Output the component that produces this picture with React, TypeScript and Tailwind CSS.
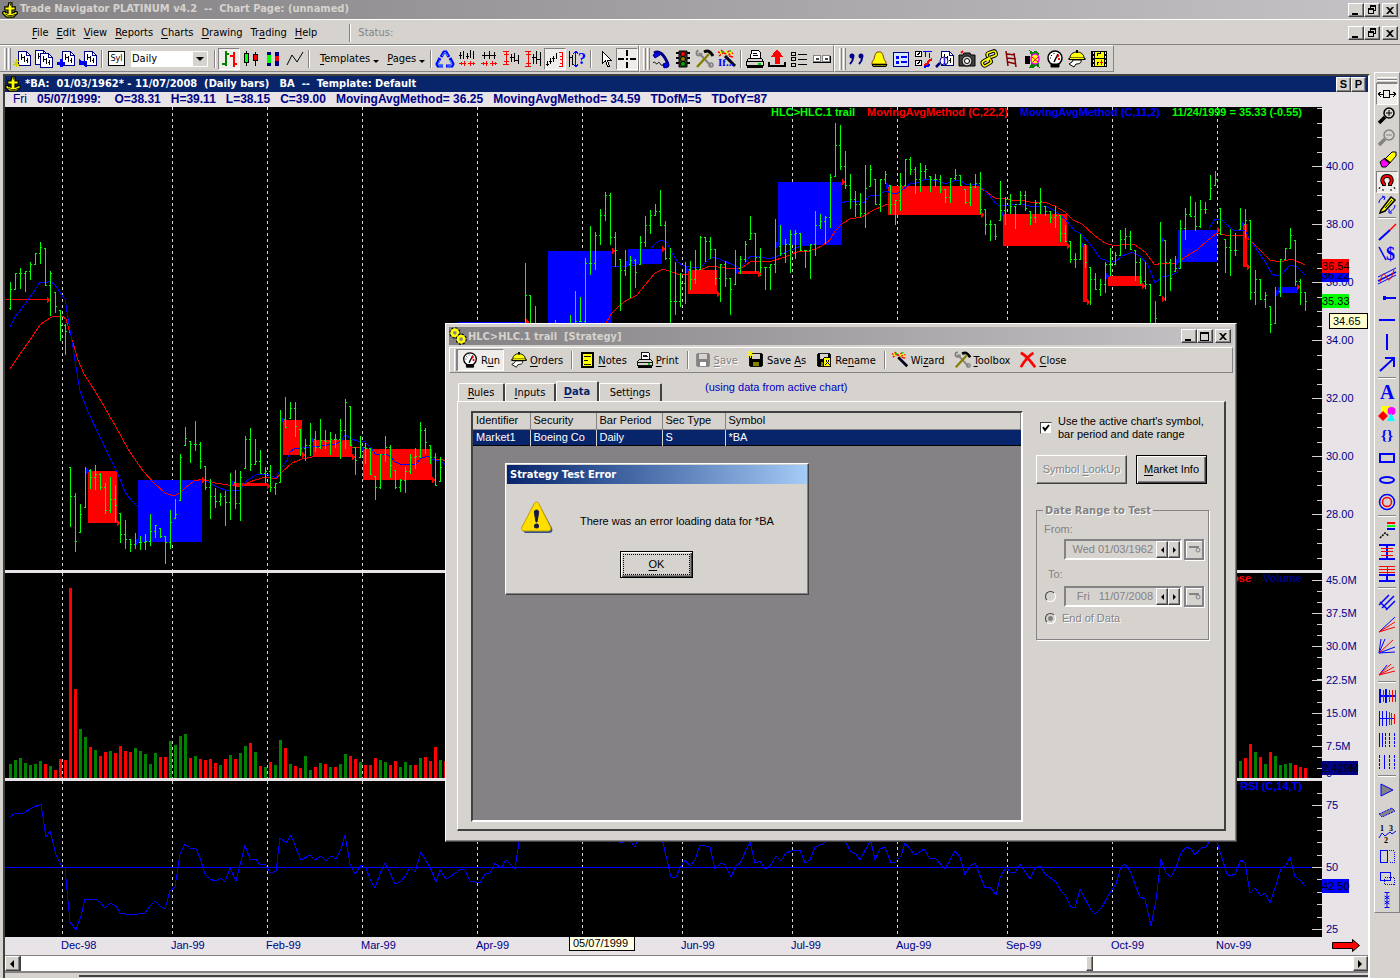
import React from "react";

const UI = "font-['DejaVu_Sans_Condensed','DejaVu_Sans',sans-serif]";
const SANS = "font-['Liberation_Sans',Arial,sans-serif]";
const RAISED =
  "border border-t-white border-l-white border-r-[#424142] border-b-[#424142] shadow-[inset_-1px_-1px_#848284]";
const SUNKEN =
  "border border-t-[#848284] border-l-[#848284] border-r-white border-b-white";

/* ---------- chart data (y values are in chart pixels) ---------- */

type Bar = { x: number; h: number; l: number; o: number; c: number };

// "high low close" for each bar, 5px apart
const SEGMENTS: { start: number; data: string }[] = [
  {
    start: 0,
    data: "282 309 289,273 289 273,268 288 273,271 291 271,262 279 264,253 264 253,242 263 247,248 285 285,271 315 273,292 312 306,310 340 325,324 354 331,467 526 496,493 551 541,504 532 514,467 507 470,469 488 477,465 489 474,473 489 487,483 513 510,477 512 499,485 521 505,513 542 534,520 548 539,539 551 544,533 548 542,536 549 542,534 549 541,514 545 531,525 537 525,528 537 536,536 563 542,510 548 522,499 518 514,454 500 457,427 445 438,441 462 444,421 450 444,442 468 461,466 489 487,479 518 496,488 507 501,493 505 496,491 525 502,473 519 482,470 508 503,471 520 477,436 468 439,428 470 464,439 464 461,450 473 473,467 482 471,465 491 487,483 494 483,410 482 419,397 427 427,402 418 408,402 436 426,429 455 448,439 460 445,423 455 439,431 451 447,419 448 440,430 448 441,432 454 439,434 447 439,419 458 430,399 448 402,406 445 445,447 474 460,436 457 447,443 463 448,448 474 474,476 499 487,454 488 454,436 461 447,445 477 465,470 488 487,479 491 480,467 492 471,454 473 457,448 468 456,422 457 430,428 453 442,445 463 457,453 485 485,457 481 467",
  },
  { start: 103, data: "263 340 295,295 340 330,306 340 330" },
  {
    start: 109,
    data: "320 340 330,330 340 330,330 340 330,315 340 330,291 340 321,297 321 321,258 340 263,226 274 263,232 269 235,209 244 215,192 220 195,193 244 237,232 266 250,259 310 270,250 275 264,256 297 260,259 287 272,236 264 242,216 246 225,210 233 215,204 215 211,190 225 225,221 259 258,248 340 301,262 314 301,273 306 283,262 303 269,261 289 279,250 283 269,236 269 237,237 261 241,237 258 249,249 284 278,264 301 264,261 286 278,278 314 289,250 284 268,256 273 259,241 261 244,216 239 233,233 271 257,248 275 267,267 289 267,264 289 264,219 272 246,225 255 253,239 262 244,230 272 234,230 258 233,233 250 250,250 267 250,244 278 244,211 255 225,214 228 221,216 243 217,174 227 177,123 176 145,125 169 166,151 188 185,174 208 199,191 216 204,193 216 213,165 227 188,165 186 169,179 204 204,179 211 179,171 183 174,185 213 204,200 224 200,173 210 185,159 185 159,157 174 169,167 193 179,163 191 171,165 178 169,176 191 179,174 186 179,175 192 189,189 202 197,178 202 178,169 179 175,175 185 185,189 203 202,183 205 187,174 187 183,172 213 209,209 234 224,220 240 224,224 239 236,181 220 210,197 224 199,194 213 206,206 228 204,191 204 195,191 210 208,211 224 217,200 222 203,188 213 201,206 215 211,211 222 217,206 227 215,215 241 233,225 241 241,241 262 259,253 267 259,234 259 244,244 267 262,267 304 279,273 289 289,279 295 284,262 292 264,248 275 264,252 264 255,230 255 239,228 248 236,231 249 249,250 280 262,258 283 281,262 288 284,284 340 330,301 340 318,222 295 240,240 300 262,259 290 278,256 271 268,220 268 228,208 239 214,196 216 216,202 230 226,200 227 209,202 213 209,175 199 188,171 185 179,208 234 234,239 272 247,229 275 250,233 255 250,208 229 224,209 237 220,220 299 292,270 304 279,279 299 299,292 307 295,306 332 324,287 323 291,259 296 259,248 259 248,228 248 235,240 285 281,279 304 292,292 310 301",
  },
];

const BARS: Bar[] = SEGMENTS.flatMap(({ start, data }) => {
  let prev = 0;
  return data.split(",").map((s, i) => {
    const [h, l, c] = s.split(" ").map(Number);
    const o = prev ? Math.min(Math.max(prev, h), l) : l - 1;
    prev = c;
    return { x: 10 + 5 * (start + i), h, l, o, c };
  });
});

const VOLUME =
  "14g 18g 20g 15g 13g 14g 17g 14r 12g 8r 19r 18r 190r 89r 49g 41g 31r 28g 22r 26r 27g 25r 32r 27r 26r 30g 27g 24g 14g 25g 21r 21r 37g 33g 42g 44g 20r 22g 19r 18r 19r 15r 13g 19r 23g 19r 25g 32g 35r 26g 12r 11g 16r 13g 38g 30r 14g 12r 10r 22g 8g 11r 15g 14r 11g 11r 14g 24g 22r 19r 16g 13r 13r 20r 18g 16g 13r 17r 11g 16g 13g 13r 20g 21r 17r 31r 18g 17r".split(" ");
const VOLUME_END = "17g 20r 34r 26g 21r 14g 26r 22g 13g 14g 15g 13r 11r 10r".split(" ");

const BLUE_MA = [
  "10,327 15,317 25,304 35,290 40,282 46,283 50,281 55,285 62,295 65,299 70,330 80,391 88,412 100,437 110,458 118,474 125,492 131,500 138,507",
  "201,479 208,482 215,486 225,490 236,491 240,490 247,480 258,474 266,474 276,478 280,470 287,460 290,452 295,448 302,448 320,446 335,444 341,441 345,435 352,439 357,441 365,442 372,449 375,454 380,455 387,454 391,457 395,462 403,465 412,464 416,464 420,459 427,456 432,459 440,461 446,465",
  "612,266 620,267 627,266 635,265 641,262 645,258 650,250 656,243 661,240 667,243 672,253 678,262 682,265 690,267 700,268 707,261 712,257 722,260 733,265 740,268 745,263 750,256 760,257 770,259 780,255 786,252 795,248 802,246 812,245 815,243",
  "842,203 847,201 857,201 864,203 868,197 872,195 878,196 885,191 892,193 897,194 902,190 910,184 920,182 925,179 938,181 945,184 953,181 960,180 965,184 977,184 983,189 990,196 995,203 1000,206 1010,205 1022,204 1032,207 1045,206 1055,211 1065,219 1075,231 1081,234 1090,244 1100,258 1107,261 1116,261 1122,256 1132,252 1140,256 1148,265 1155,283 1162,277 1172,275 1177,272 1180,264",
  "1209,229 1215,219 1221,219 1227,225 1235,231 1245,230 1250,240 1260,254 1267,265 1272,274 1277,276 1283,273 1290,265 1297,267 1305,275",
];
const RED_MA = [
  "10,369 20,354 30,340 40,325 45,321 52,317 62,316 66,319 70,333 78,360 84,374 95,391 105,408 116,427 128,449 143,471 155,484 165,493 174,496 180,493 185,488 194,481 203,479 215,483 235,486 240,486 255,480 266,477 276,479 282,472 292,463 302,459 312,457 325,454 340,448 355,447 364,447 370,450 432,459 443,460 446,461",
  "606,323 612,313 620,305 627,300 637,295 645,285 655,273 663,269 672,272 680,275 690,274 700,270 710,266 725,268 737,269 743,267 750,262 760,261 772,261 785,257 797,252 810,251 822,246 830,240 835,231 843,223 850,219 862,217 870,212 885,205 890,204",
  "980,188 988,193 995,198 1005,199 1015,201 1022,200 1030,202 1047,203 1055,206 1065,212 1073,220 1082,224 1095,236 1105,243 1115,246 1128,244 1135,245 1145,252 1155,265 1162,263 1177,264 1185,257 1197,250 1207,241 1217,233 1225,235 1235,236 1243,235 1250,240 1260,250 1270,260 1280,262 1292,259 1305,265",
];
const RSI =
  "10,817 15,813 23,813 32,808 41,804 46,837 50,831 56,855 62,867 65,868 70,922 76,930 81,916 85,899 95,899 100,902 105,908 110,903 116,906 120,913 131,915 145,913 150,906 155,901 161,907 165,909 170,891 175,887 180,854 185,844 190,848 196,849 200,858 205,874 210,879 215,881 221,878 225,882 230,868 236,881 240,865 245,845 250,859 256,859 260,865 265,864 270,873 276,871 280,838 286,843 291,835 296,848 301,860 310,855 315,860 321,856 326,861 331,856 336,859 341,849 345,835 350,864 355,874 361,865 366,868 370,879 375,888 381,871 385,863 390,873 395,884 401,881 406,875 410,867 415,872 421,852 426,861 430,867 436,882 440,870 446,879 451,876 461,869 465,870 470,881 480,883 485,874 490,873 495,863 501,868 506,860 515,869 519,842 540,800 580,820 610,835 621,843 628,838 635,847 640,830 655,825 663,843 671,877 676,877 680,868 685,860 690,866 695,860 700,845 710,847 715,869 721,863 725,865 731,877 736,866 740,863 750,842 755,863 760,861 765,869 770,866 776,856 781,861 786,853 791,851 800,850 805,863 810,860 815,847 823,844 835,825 846,843 851,852 856,854 860,860 869,843 871,842 875,860 880,849 885,847 891,863 895,862 901,856 905,843 915,855 924,849 930,859 935,858 945,869 955,851 960,857 965,875 970,866 975,863 985,888 990,887 996,895 1000,878 1006,867 1010,872 1015,873 1020,864 1030,879 1035,868 1040,866 1045,874 1056,882 1061,891 1065,895 1071,907 1075,908 1080,889 1091,910 1095,914 1102,907 1111,891 1116,884 1121,867 1125,864 1131,873 1136,887 1140,897 1145,899 1151,926 1156,900 1161,859 1166,873 1171,877 1176,867 1181,853 1186,847 1191,849 1195,855 1201,848 1206,847 1209,842 1214,835 1217,842 1227,874 1230,876 1235,874 1241,860 1245,863 1250,893 1255,888 1261,896 1265,893 1270,903 1276,885 1281,869 1286,865 1290,857 1295,877 1300,880 1305,886";

// x1, y1, x2, y2, colour of each trade
const TRADES: [number, number, number, number, string][] = [
  [88, 471, 117, 523, "#f00"],
  [138, 480, 202, 542, "#00f"],
  [233, 483, 267, 486, "#f00"],
  [283, 420, 302, 455, "#f00"],
  [313, 440, 352, 457, "#f00"],
  [363, 449, 432, 480, "#f00"],
  [458, 322, 526, 330, "#00f"],
  [548, 251, 612, 340, "#00f"],
  [628, 249, 662, 264, "#00f"],
  [688, 270, 717, 294, "#f00"],
  [738, 271, 758, 274, "#f00"],
  [778, 182, 842, 245, "#00f"],
  [888, 186, 981, 215, "#f00"],
  [1003, 214, 1067, 246, "#f00"],
  [1083, 245, 1087, 302, "#f00"],
  [1108, 276, 1142, 286, "#f00"],
  [1178, 230, 1217, 262, "#00f"],
  [1243, 224, 1247, 267, "#f00"],
  [1278, 287, 1297, 293, "#00f"],
];

const MONTHS: [string, number][] = [
  ["Dec-98", 62],
  ["Jan-99", 172],
  ["Feb-99", 267],
  ["Mar-99", 362],
  ["Apr-99", 477],
  ["", 582],
  ["Jun-99", 682],
  ["Jul-99", 792],
  ["Aug-99", 897],
  ["Sep-99", 1007],
  ["Oct-99", 1112],
  ["Nov-99", 1217],
];

/* ---------- chart panes ---------- */

const Plot: React.FC<{ top: number; children: React.ReactNode }> = ({ top, children }) => (
  <svg className="block flex-1 min-w-0 h-full bg-black" shapeRendering="crispEdges">
    <g transform={`translate(-5 ${-top})`}>
      {MONTHS.map(([, x]) => (
        <line key={x} x1={x + 0.5} x2={x + 0.5} y1={top} y2={top + 470} stroke="#d6d3ce" strokeDasharray="3 3" />
      ))}
      {children}
    </g>
  </svg>
);

type AxisProps = {
  top: number;
  height: number;
  labels: [string, number][];
  step: number;
  children?: React.ReactNode;
};

const Axis: React.FC<AxisProps> = ({ top, height, labels, step, children }) => {
  const ticks: number[] = [];
  for (let y = labels[0][1]; y > top; y -= step) ticks.push(y);
  for (let y = labels[0][1] + step; y < top + height; y += step) ticks.push(y);
  return (
    <svg className={`block w-[57px] h-full flex-none ${SANS} text-[11px]`}>
      <rect width="11" height="100%" fill="#000" />
      <g transform={`translate(-1311 ${-top})`}>
        <g stroke="#d6d3ce" shapeRendering="crispEdges">
          {ticks.map((y) => (
            <line key={y} x1="1317" x2="1322" y1={Math.round(y) + 0.5} y2={Math.round(y) + 0.5} />
          ))}
          {labels.map(([t, y]) => (
            <line key={t} x1="1312" x2="1322" y1={y + 0.5} y2={y + 0.5} />
          ))}
        </g>
        {labels.map(([t, y]) => (
          <text key={t} x="1326" y={y + 4} fill="#000084">
            {t}
          </text>
        ))}
        {children}
      </g>
    </svg>
  );
};

const Tag: React.FC<{ y: number; w?: number; fill: string; text: string }> = ({ y, w = 27, fill, text }) => (
  <g>
    <rect x="1322" y={y - 7} width={w} height="14" fill={fill} />
    <text x="1322" y={y + 4} fill="#000">
      {text}
    </text>
  </g>
);

const LEGEND = `absolute right-[66px] top-0 flex gap-3 text-[11px] leading-[11px] font-bold ${SANS}`;

const PricePane = () => (
  <div className="relative flex h-[463px]">
    <Plot top={107}>
      <line x1="5" x2="48" y1="299.5" y2="299.5" stroke="#f00" />
      {TRADES.map(([x1, y1, x2, y2, c]) => (
        <rect key={x1} x={x1} y={y1} width={x2 - x1} height={y2 - y1} fill={c} />
      ))}
      <g fill="none">
        {RED_MA.map((p) => (
          <polyline key={p} points={p} stroke="#f00" />
        ))}
        {BLUE_MA.map((p) => (
          <polyline key={p} points={p} stroke="#00f" />
        ))}
        {BARS.map((b) => (
          <path
            key={b.x}
            d={`M${b.x + 0.5} ${b.h}V${b.l + 1}M${b.x - 1} ${b.o + 0.5}h2M${b.x} ${b.c + 0.5}h2`}
            stroke="#0f0"
          />
        ))}
      </g>
      {TRADES.map(([x1, y1, x2, y2, c]) => (
        <g key={x1}>
          <path d={`M${x1 - 2} ${(c === "#f00" ? y1 : y2) - 3}l4 3l-4 3z`} fill="#00f" />
          <path d={`M${x2} ${(c === "#f00" ? y2 : y1) - 3}l4 3l-4 3z`} fill="#f00" />
        </g>
      ))}
      <path d="M47 297l4 3l-4 3zM1162 296l4 3l-4 3z" fill="#f00" />
      <path d="M1161 237l4 3l-4 3z" fill="#00f" />
    </Plot>
    <Axis
      top={107}
      height={463}
      step={14.5}
      labels={[
        ["40.00", 166],
        ["38.00", 224],
        ["36.00", 282],
        ["34.00", 340],
        ["32.00", 398],
        ["30.00", 456],
        ["28.00", 514],
      ]}
    >
      <Tag y={275} fill="#00f" text="36.22" />
      <Tag y={266} fill="#f00" text="36.54" />
      <Tag y={301} fill="#0f0" text="35.33" />
      <rect x="1329.5" y="313.5" width="38" height="15" fill="#ffffce" stroke="#000" />
      <text x="1333" y="325">
        34.65
      </text>
    </Axis>
    <div className={LEGEND}>
      <span className="text-[#00ff00]">HLC&gt;HLC.1 trail</span>
      <span className="text-[#ff0000]">MovingAvgMethod (C,22,2)</span>
      <span className="text-[#0000ff]">MovingAvgMethod (C,11,2)</span>
      <span className="text-[#00ff00]">11/24/1999 = 35.33 (-0.55)</span>
    </div>
  </div>
);

const VolumePane = () => (
  <div className="relative flex h-[205px]">
    <Plot top={573}>
      {[...VOLUME.map((v, i) => [v, i] as const), ...VOLUME_END.map((v, i) => [v, i + 246] as const)].map(([v, i]) => (
        <rect
          key={i}
          x={9 + 5 * i}
          y={778 - parseInt(v)}
          width="3"
          height={parseInt(v)}
          fill={v.endsWith("g") ? "#008200" : "#f00"}
        />
      ))}
    </Plot>
    <Axis
      top={573}
      height={205}
      step={11.05}
      labels={[
        ["45.0M", 580],
        ["37.5M", 613],
        ["30.0M", 646],
        ["22.5M", 680],
        ["15.0M", 713],
        ["7.5M", 746],
      ]}
    >
      <text x="1326" y="777" fill="#000084">
        0
      </text>
      <Tag y={768} w={36} fill="#000084" text="2.429M" />
    </Axis>
    <div className={LEGEND}>
      <span className="text-[#ff0000]">Close</span>
      <span className="text-[#000084]">Volume</span>
    </div>
  </div>
);

const RsiPane = () => (
  <div className="relative flex h-[156px]">
    <Plot top={781}>
      <line x1="0" x2="4000" y1="867.5" y2="867.5" stroke="#00f" />
      <polyline points={RSI} stroke="#00f" fill="none" />
    </Plot>
    <Axis
      top={781}
      height={156}
      step={12.4}
      labels={[
        ["75", 805],
        ["50", 867],
        ["25", 929],
      ]}
    >
      <Tag y={886} fill="#00f" text="42.50" />
    </Axis>
    <div className={LEGEND}>
      <span className="text-[#0000ff]">RSI (C,14,T)</span>
    </div>
  </div>
);

const TimeAxis = () => (
  <div className="flex h-[18px]">
    <svg className={`block flex-1 min-w-0 h-full overflow-visible ${SANS} text-[11px]`}>
      {MONTHS.map(([t, x]) => (
        <text key={x} x={x - 6} y="12" fill="#000084">
          {t}
        </text>
      ))}
      <rect x="564.5" y="-1.5" width="65" height="15" fill="#ffffe7" stroke="#000" />
      <text x="568" y="10">
        05/07/1999
      </text>
    </svg>
    <svg className="block flex-none w-[57px] h-full">
      <path d="M21.5 5.5h20v-3l7 6l-7 6v-3h-20z" fill="#f00" stroke="#000" />
    </svg>
  </div>
);

/* ---------- icons ---------- */

const Icon: React.FC<{ children: React.ReactNode; size?: string }> = ({ children, size = "w-5 h-5" }) => (
  <svg viewBox="0 0 20 20" className={`block flex-none ${size}`} fill="none" stroke="#000" shapeRendering="crispEdges">
    {children}
  </svg>
);

const Soft: React.FC<{ children: React.ReactNode }> = ({ children }) => (
  <g shapeRendering="auto">{children}</g>
);

type GlyphProps = { x: number; y: number; size: number; fill?: string; children: string };

const Glyph: React.FC<GlyphProps> = ({ x, y, size, fill = "#00f", children }) => (
  <text x={x} y={y} fontSize={size} fill={fill} stroke="none" fontWeight="bold" fontFamily="Liberation Serif, serif">
    {children}
  </text>
);

const Anchor = () => (
  <Icon size="w-4 h-4">
    <Soft>
      <path d="M8.500 1h4v5h4v4h-4v4l3-1v-1h3l1 2l-5 5h-9l-5-5l1-2h3v1l3 1v-4h-4v-4h4z" fill="#ff0" stroke="#000" strokeWidth="1.500" />
      <circle cx="10.500" cy="3.500" r="1" fill="#000" stroke="none" />
      <path d="M4 15l4 2h5l4-2" />
    </Soft>
  </Icon>
);

const Doc = ({ x = 5, y = 2 }: { x?: number; y?: number }) => (
  <g transform={`translate(${x} ${y})`}>
    <path d="M.5.5h8l4 4v10h-12z" fill="#fff" stroke="#000084" />
    <path d="M8.500.5v4h4" stroke="#000084" />
    <path d="M3.500 3v6M3.500 6.500h3M6.500 5v6M8 9.500h2M9.500 7v5" />
  </g>
);

const Gauge = () => (
  <Soft>
    <circle cx="10" cy="9" r="7" fill="#fff" strokeWidth="1.500" />
    <path d="M6 15h8v3h-8z" fill="#000" />
    <path d="M9 13l4-8" strokeWidth="1.500" />
    <path d="M12 8l2-2M13 10h2" stroke="#f00" strokeWidth="2" />
    <path d="M5 9h1M6 6l1 1M9 4v1" />
  </Soft>
);

const Hat = () => (
  <Soft>
    <path d="M3 9c0-8 14-8 14 0z" fill="#ff0" />
    <path d="M10 1v3M1.500 10h17" stroke="#000" strokeWidth="2" />
    <path d="M3 9.500h14" stroke="#ff0" />
    <path d="M6 11h8c1 3-2 4-5 4l-2 3l-5-3l3-2z" fill="#fff" />
  </Soft>
);

const Printer = () => (
  <>
    <path d="M5.500 9.500l1-8h7l2 2v6z" fill="#fff" />
    <path d="M8 4.500h4M8 6.500h5" />
    <path d="M3.500 9.500h13l2 3v4h-17v-4z" fill="#d6d3ce" />
    <path d="M2 12.500h16" />
    <path d="M2 17.500h16" strokeWidth="2" />
    <path d="M13 14.500h3" stroke="#0c0" strokeWidth="2" />
  </>
);

const Tools = () => (
  <Soft>
    <path d="M4 4l12 13" stroke="#848284" strokeWidth="2" />
    <circle cx="4" cy="4" r="2.500" stroke="#848284" strokeWidth="2" strokeDasharray="11 5" />
    <circle cx="16" cy="16" r="2" stroke="#848284" strokeWidth="1.500" />
    <path d="M2 18l12-13" stroke="#848200" strokeWidth="2.500" />
    <path d="M9 3c4-2 6-1 9 4" strokeWidth="3" />
  </Soft>
);

const Wand = () => (
  <Soft>
    <path d="M8 7l10 10" strokeWidth="3" />
    <path d="M9 8l8 8" stroke="#000084" />
    <path d="M1 3l4 1M4 1l4 4M2 7l4-3M8 5l4-3M10 6l6-2M12 7l4 1" stroke="#f00" strokeWidth="1.500" />
    <path d="M3 2l2 4M9 2l2 4M13 3l2 3" stroke="#ff0" strokeWidth="1.500" />
    <path d="M6 2v2M12 2h2" stroke="#0c0" strokeWidth="1.500" />
  </Soft>
);

const Floppy = ({ c = "#000" }: { c?: string }) => (
  <g>
    <path d="M3 3h14v14h-14z" fill={c} stroke={c} />
    <path d="M6 3h8v6h-8z" fill="#d6d3ce" stroke="none" />
    <path d="M7 12h6v5h-6z" fill={c === "#000" ? "#848200" : "#fff"} stroke="none" />
  </g>
);

const ZoomGlass = ({ c, mark }: { c: string; mark: string }) => (
  <Soft>
    <circle cx="12" cy="7" r="5" stroke={c} strokeWidth="1.500" />
    <path d="M8 11l-6 6" stroke={c} strokeWidth="3.500" />
    <path d={mark} stroke={c} />
  </Soft>
);

const NEW_ICONS = [
  <>
    <Doc x={6} />
    <path d="M4 10v8M1 12l6 5M7 12l-6 5M1 15h7" stroke="#cc0" />
  </>,
  <>
    <Doc x={1} y={1} />
    <Doc x={6} y={4} />
  </>,
  <>
    <Doc x={6} />
    <path d="M1 14h8M5 10v8" stroke="#00f" strokeWidth="3" />
  </>,
  <>
    <Doc x={6} />
    <path d="M2 13h6v5" stroke="#00f" strokeWidth="2.500" />
    <path d="M1 10v6h6z" fill="#00f" stroke="none" />
  </>,
];

const CHART_TYPES = [
  <>
    <path d="M6.500 2v15M3 14.500h4M7 4.500h3" stroke="#008200" strokeWidth="2" />
    <path d="M14.500 3v15M11 6.500h4M15 14.500h3" stroke="#f00" strokeWidth="2" />
  </>,
  <>
    <path d="M5.500 2v15M14.500 3v14" />
    <path d="M3.500 4.500h4v9h-4z" fill="#0f0" />
    <path d="M12.500 5.500h4v6h-4z" fill="#f00" />
  </>,
  <>
    <path d="M4 3h4v14h-4zM12 3h4v14h-4z" fill="#000084" stroke="none" />
    <path d="M4 6h4v8h-4z" fill="#0f0" stroke="none" />
    <path d="M12 7h4v5h-4z" fill="#f00" stroke="none" />
  </>,
  <Soft>
    <path d="M2 16l5-10l5 7l6-10" />
  </Soft>,
];

const SCALE_ICONS = [
  <Soft>
    <path d="M6 8l3-5h2l3 5M5 9l-3 6l1 2h5M15 9l3 6l-1 2h-6" stroke="#00f" strokeWidth="3" />
    <path d="M7 7l3-4l3 4M5 11l-2 4l1 2h4M15 11l2 4l-1 2h-4" stroke="#4af" />
  </Soft>,
  <>
    <path d="M3.500 3v7M6.500 2v8M10.500 4v6M13.500 1v8M16.500 2v8M2 6.500h3M9 7.500h3" />
    <path d="M2 14.500h7M11 14.500h7M7 12v5M4 13v3M13 12v5M16 13v3" stroke="#f00" />
  </>,
  <>
    <path d="M5.500 3v7M10.500 2v8M15.500 3v7M3 6.500h14" />
    <path d="M2 14.500h7M11 14.500h7M7 12v5M13 12v5M4 13v3M16 13v3" stroke="#f00" />
  </>,
  <>
    <path d="M10.500 5v8M13.500 4v9M17.500 6v9M9 8.500h4M14 11.500h4" />
    <path d="M2 2.500h6M2 15.500h6M5.500 3v12M3 5.500h5M3 12.500h5" stroke="#f00" />
  </>,
  <>
    <path d="M10.500 5v10M13.500 2v13M17.500 3v14M9 8.500h4M14 10.500h4" />
    <path d="M2 2.500h6M2 17.500h6M5.500 3v14M3 5.500h5M3 14.500h5" stroke="#f00" />
  </>,
  <>
    <path d="M2.500 12v5M5.500 9v6M8.500 7v6M11.500 4v6M1 15.500h3M4 12.500h3M7 9.500h3" />
    <path d="M14 3.500h3v14h-3M15 7.500h2M15 10.500h2M15 14.500h2" stroke="#f00" />
  </>,
  <>
    <path d="M2.500 2v16M5.500 6v10M2 8.500h4" />
    <path d="M8.500 3v14M6 5l3-3l2 3M6 15l3 3l2-3" stroke="#00f" />
    <Glyph x={11} y={15} size={16}>?</Glyph>
  </>,
];

const CURSOR = (
  <path d="M7.500 2.500v12l3-3l2 6h2l-2-6h4z" fill="#fff" />
);
const CROSS = <path d="M10 1v6M10 13v6M1 10h6M13 10h6M9 10h2" strokeWidth="2" />;

const TRADE_ICONS = [
  <Soft>
    <path d="M3 4c4-2 8 0 11 5s4 8 1 9" stroke="#000084" strokeWidth="3" />
    <path d="M2 6l5-3l2 3l-5 3zM12 15l5-2l1 4l-5 2z" fill="#00f" stroke="#000084" />
    <path d="M2 14c2-3 3 3 5 0s2 4 5 2" />
  </Soft>,
  <Soft>
    <path d="M3 4h14M3 9h14M3 14h14" strokeWidth="2" />
    <path d="M6 2h8v16h-8z" fill="#424142" />
    <circle cx="10" cy="5" r="2.500" fill="#f00" />
    <circle cx="10" cy="10" r="2.500" fill="#848200" />
    <circle cx="10" cy="15" r="2.500" fill="#0a0" />
  </Soft>,
  <Tools />,
  <>
    <Wand />
    <Glyph x={1} y={17} size={11}>If...</Glyph>
  </>,
];

const OUTPUT_ICONS = [
  <Printer />,
  <>
    <path d="M2 13v4h16v-4" strokeWidth="2.500" />
    <path d="M10 1l-5 6h3v7h4v-7h3z" fill="#f00" stroke="#f00" />
  </>,
  <>
    <circle cx="4.500" cy="5" r="2" />
    <circle cx="4.500" cy="10" r="2" />
    <circle cx="4.500" cy="16" r="2" />
    <path d="M9 5.500h9M9 10.500h9M9 15.500h9" />
  </>,
  <>
    <path d="M2.500 6.500h7v6h-7zM11.500 6.500h7v6h-7z" fill="#fff" stroke="#848284" />
    <path d="M2 13.500h17v-7" />
    <path d="M5 9.500h3M14 9.500h3" strokeWidth="2" stroke="#424142" />
  </>,
];

const MISC_ICONS = [
  <Soft>
    <path d="M6 9c0 3-1 4-3 6M15 9c0 3-1 4-3 6" stroke="#000084" strokeWidth="2" />
    <circle cx="5" cy="7" r="2.500" fill="#000084" stroke="none" />
    <circle cx="14" cy="7" r="2.500" fill="#000084" stroke="none" />
  </Soft>,
  <Soft>
    <path d="M8 3h4c3 2 2 8 5 10v2h-14v-2c3-2 2-8 5-10z" fill="#ff0" stroke="#840" />
    <path d="M3 15.500h15l-1 2h-13z" fill="#848200" />
  </Soft>,
  <>
    <path d="M2.500 3.500h15v14h-15z" fill="#d6e7ff" stroke="#000084" />
    <path d="M5 8h3M5 13h3" stroke="#00f" strokeWidth="3" />
    <path d="M10 8h6M10 13h6" stroke="#00f" strokeWidth="2" />
  </>,
  <>
    <path d="M2.500 2.500h6v5h-6zM2.500 11.500h6v5h-6z" fill="#fff" />
    <path d="M4 5l1 1l2-3M4 14l1 1l2-3" />
    <path d="M10 2.500h9M12.500 3v5M16.500 4v5" stroke="#00f" />
    <path d="M11 16l3-1l2-3l3-2" stroke="#f00" strokeWidth="2" />
    <path d="M11 18l6-2" stroke="#00f" strokeWidth="2" />
  </>,
  <>
    <Doc x={6} />
    <Soft>
      <path d="M5 14l-4 4" stroke="#000084" strokeWidth="2.500" />
      <circle cx="9" cy="12" r="4" fill="#fff" stroke="#000084" />
      <Glyph x={7} y={15} size={9}>1</Glyph>
    </Soft>
  </>,
  <Soft>
    <path d="M2 6h4l1-2h6l1 2h4v11h-16z" fill="#424142" />
    <circle cx="10" cy="12" r="5" fill="#d6d3ce" />
    <circle cx="10" cy="12" r="2.500" fill="#fff" />
    <path d="M4 4l2-2" stroke="#f00" strokeWidth="2" />
  </Soft>,
  <Soft>
    <rect x="8" y="3" width="9" height="5" rx="2" transform="rotate(-20 12 5)" strokeWidth="3.500" />
    <rect x="8" y="3" width="9" height="5" rx="2" transform="rotate(-20 12 5)" stroke="#ff0" strokeWidth="1.500" />
    <rect x="3" y="11" width="9" height="5" rx="2" transform="rotate(-30 7 13)" strokeWidth="3.500" />
    <rect x="3" y="11" width="9" height="5" rx="2" transform="rotate(-30 7 13)" stroke="#ff0" strokeWidth="1.500" />
    <path d="M8 12l3-4" stroke="#ff0" strokeWidth="2" />
  </Soft>,
  <Soft>
    <path d="M5 2l2 15M13 4l2 14M6 5l8 1M6 9l9 1M7 13l8 2" stroke="#840000" strokeWidth="1.500" />
  </Soft>,
  <>
    <path d="M2 7h4v7h-4z" fill="#000" />
    <path d="M7 2l3 2l3-2l3 3l-3 1l-4 1zM9 14l-2 4h4l2-2l3 2l-1-4z" fill="#008200" stroke="#008200" />
    <Soft>
      <ellipse cx="12" cy="10" rx="4" ry="5" fill="#ff0" stroke="#f0f" strokeWidth="1.500" />
      <path d="M9 8l6 5M10 13l5-5" stroke="#f00" />
    </Soft>
  </>,
  <Gauge />,
  <Hat />,
  <>
    <path d="M2.500 2.500h15v15h-15z" fill="#ff0" />
    <path d="M4 2v16M16 2v16" strokeWidth="3" />
    <path d="M4 3v15M16 3v15" stroke="#ff0" strokeWidth="1" strokeDasharray="2 2" />
    <path d="M6 9.500h9M8 7v-3h3v-1M8 16v-3h2" />
    <path d="M12.500 11v5M11 13.500h3" stroke="#f00" />
  </>,
];

const SIDE_GROUPS: React.ReactNode[][] = [
  [
    <path d="M6.500 6.500h6v7h-6zM1 10.500h5M13 10.500h6M4 8l-3 2l3 3M16 8l3 2l-3 3" />,
    <ZoomGlass c="#000" mark="M12 4v6M9 7h6" />,
    <ZoomGlass c="#848284" mark="M9 7h6" />,
    <Soft>
      <path d="M8 9l7-7h4v4l-7 8z" fill="#ff0" />
      <path d="M3 12l5-4l5 5l-4 4h-4z" fill="#f0f" />
      <path d="M8 9l5 4" strokeWidth="2" />
    </Soft>,
    <Soft>
      <path d="M7 14v-2c-3-3-2-8 3-8s6 5 3 8v2" strokeWidth="4" />
      <path d="M7 13v-1c-3-3-2-8 3-8s6 5 3 8v1" stroke="#f00" strokeWidth="2" />
      <path d="M3 15l-1 2M6 17v2M14 17v2M17 15l1 2" />
    </Soft>,
    <Soft>
      <path d="M4 16l10-13l4 3l-10 11l-5 2z" fill="#ff0" strokeWidth="1.500" />
      <path d="M8 14l7-8" />
      <path d="M2 9c0-3 2-5 5-6M5 2l3 1l-1 3M18 11c0 3-2 5-5 7M12 15v4h3" stroke="#00f" />
    </Soft>,
  ],
  [
    <Soft>
      <path d="M2 18l11-10" stroke="#00f" strokeWidth="2" />
      <path d="M13 8l6-6" stroke="#f00" strokeWidth="1.500" />
    </Soft>,
    <Soft>
      <path d="M2 3l7 13" stroke="#00f" strokeWidth="1.500" />
      <Glyph x={9} y={16} size={18}>$</Glyph>
    </Soft>,
    <Soft>
      <path d="M1 11l18-9M1 18l18-9" stroke="#00f" />
      <path d="M1 15l18-9" stroke="#00f" strokeWidth="1.500" />
      <path d="M3 16c3-12 5-8 7-4s4 2 7-8" stroke="#f00" />
    </Soft>,
    <>
      <path d="M7 10h12" stroke="#00f" strokeWidth="2" />
      <path d="M6 8h3v4h-3z" fill="#00f" stroke="none" />
    </>,
    <path d="M2 10h16" stroke="#00f" strokeWidth="2" />,
    <path d="M10 2v16" stroke="#00f" strokeWidth="2" />,
    <Soft>
      <path d="M3 17l13-12M8 4h9v9" stroke="#00f" strokeWidth="2" />
    </Soft>,
  ],
  [
    <Glyph x={3} y={17} size={20}>A</Glyph>,
    <Soft>
      <path d="M4 2h8v7h-8z" fill="#ff0" stroke="none" />
      <circle cx="14.500" cy="7" r="4" fill="#f0f" stroke="none" />
      <path d="M6 7l5 5l-5 5l-5-5z" fill="#f00" stroke="none" />
      <path d="M14 9l4 8h-8z" fill="#0ff" stroke="none" />
    </Soft>,
    <Glyph x={4} y={14} size={15}>{"{}"}</Glyph>,
    <path d="M3 6h14v8h-14z" stroke="#00f" strokeWidth="2" />,
    <Soft>
      <ellipse cx="10" cy="10" rx="7" ry="3" stroke="#00f" strokeWidth="2" />
    </Soft>,
    <Soft>
      <circle cx="10" cy="10" r="7.500" stroke="#00f" strokeWidth="1.500" />
      <circle cx="10" cy="10" r="4.500" stroke="#f00" strokeWidth="1.500" />
    </Soft>,
  ],
  [
    <>
      <path d="M10 3h8" stroke="#f00" strokeWidth="2" />
      <path d="M10 6h8" stroke="#0f0" strokeWidth="2" />
      <path d="M10 9h8" stroke="#00f" strokeWidth="2" />
      <Soft>
        <path d="M3 18l5-5l4 3" strokeDasharray="2 1" strokeWidth="1.500" />
      </Soft>
    </>,
    <>
      <path d="M2 3h16M2 17h16M10 3v14" stroke="#00f" strokeWidth="2" />
      <path d="M4 6.500h12M4 9.500h12M4 13.500h12" stroke="#f00" />
    </>,
    <>
      <path d="M2 11h16M2 17h16M10 11v6" stroke="#00f" strokeWidth="2" />
      <path d="M2 2.500h16M2 5.500h16M2 8.500h16M10.500 2v8" stroke="#f00" />
    </>,
  ],
  [
    <Soft>
      <path d="M2 13l10-10M5 16l12-12M9 18l9-9M3 10l7 7" stroke="#00f" strokeWidth="1.500" />
    </Soft>,
    <Soft>
      <path d="M2 18l16-15" stroke="#00f" />
      <path d="M2 18l16-10M2 18l16-5" stroke="#f00" />
    </Soft>,
    <Soft>
      <path d="M2 17l2-14M2 17l6-14M2 17l16-6M2 17l16-1" stroke="#00f" />
      <path d="M2 17l14-13" stroke="#f00" />
    </Soft>,
    <Soft>
      <path d="M2 17l8-10" stroke="#00f" />
      <path d="M2 17l12-11M2 17l15-8M2 17l16-4" stroke="#f00" />
    </Soft>,
  ],
  [
    <>
      <path d="M3 3v14M9 3v14M2 10h16" stroke="#00f" strokeWidth="2" />
      <path d="M6.500 4v12M12.500 4v12M15.500 4v12M18.500 4v12" stroke="#f00" />
    </>,
    <>
      <path d="M2.500 3v15M5.500 3v15M9.500 3v15M2 10.500h16" stroke="#00f" />
      <path d="M12.500 4v13M14.500 5v12M17.500 6v10" stroke="#f00" />
    </>,
    <>
      <path d="M2.500 3v14M5.500 3v14" stroke="#00f" />
      <path d="M8.500 3v14M12.500 3v14M17.500 3v14" stroke="#00f" strokeDasharray="3 1" />
    </>,
    <>
      <path d="M7.500 3v14" stroke="#00f" />
      <path d="M2.500 3v14M12.500 3v14M17.500 3v14" stroke="#00f" strokeDasharray="3 1" />
    </>,
  ],
  [
    <Soft>
      <path d="M4 4l12 6l-12 6z" fill="#848284" stroke="#00f" />
    </Soft>,
    <Soft>
      <path d="M2 12l13-6l3 3l-13 6z" fill="#848284" stroke="#00f" strokeDasharray="2 1" />
    </Soft>,
    <Soft>
      <path d="M2 14l3-5l3 3l5-4l2 2l4-3" stroke="#00f" />
      <Glyph x={3} y={7} size={8} fill="#000">1</Glyph>
      <Glyph x={7} y={19} size={8} fill="#000">2</Glyph>
      <Glyph x={12} y={7} size={8} fill="#000">3</Glyph>
    </Soft>,
    <>
      <path d="M3.500 4.500h7v12h-7z" stroke="#00f" />
      <path d="M12 4.500h5v12h-5" stroke="#00f" strokeDasharray="1 1" />
    </>,
    <>
      <path d="M3.500 4.500h10v8h-10z" stroke="#00f" />
      <path d="M7.500 9.500h10v7h-10z" stroke="#00f" strokeDasharray="1 1" />
    </>,
    <Soft>
      <path d="M10 2v16M7.500 2.500h5M7.500 17.500h5M7.500 6l5 3M12.500 6l-5 3M7.500 11l5 3M12.500 11l-5 3" stroke="#00f" />
    </Soft>,
  ],
];

/* ---------- controls ---------- */

// "&" marks the underlined letter
const Label: React.FC<{ text: string }> = ({ text }) => {
  const i = text.indexOf("&");
  if (i < 0) return <>{text}</>;
  return (
    <>
      {text.slice(0, i)}
      <u className="underline-offset-2">{text[i + 1]}</u>
      {text.slice(i + 2)}
    </>
  );
};

const ToolButton: React.FC<{ icon: React.ReactNode; on?: boolean }> = ({ icon, on }) => (
  <button
    className={`flex items-center justify-center w-[22px] h-[22px] flex-none ${on ? `bg-[#efedea] ${SUNKEN}` : ""}`}
  >
    <Icon>{icon}</Icon>
  </button>
);

const Sep = () => <div className="w-[2px] h-[18px] mx-[2px] flex-none bg-[#848284] border-r border-white" />;

const Grip = () => (
  <div className="flex gap-px flex-none">
    <div className="w-[3px] h-[22px] border-l border-l-white border-r border-r-[#848284]" />
    <div className="w-[3px] h-[22px] border-l border-l-white border-r border-r-[#848284]" />
  </div>
);

const BOX_GLYPHS = {
  min: "M3 9h6v2h-6z",
  max: "M2 2h9v9h-9zM3 4v6h7v-6z",
  restore: "M5 1h6v6h-2v-1h1v-3h-4v1h-1zM3 4h6v6h-6zM4 6v3h4v-3z",
  close: "M3 3h2l2 2l2-2h2l-3 3.500l3 3.500h-2l-2-2l-2 2h-2l3-3.500z",
};

const WinButtons: React.FC<{ mid: "max" | "restore" }> = ({ mid }) => (
  <div className="flex flex-none">
    {(["min", mid, "close"] as const).map((k) => (
      <button
        key={k}
        aria-label={k}
        className={`flex items-center justify-center w-4 h-[14px] bg-[#d6d3ce] ${RAISED} ${k === "close" ? "ml-[2px]" : ""}`}
      >
        <svg className="w-[14px] h-3" viewBox="0 0 14 12" fillRule="evenodd">
          <path d={BOX_GLYPHS[k]} />
        </svg>
      </button>
    ))}
  </div>
);

const Toolbar = () => (
  <div className={`flex h-[27px] ${UI} text-[11px]`}>
    <div className="flex items-center pl-1 border-t border-t-white border-b border-b-[#848284] border-r border-r-[#848284]">
      <Grip />
      {NEW_ICONS.map((icon, i) => (
        <ToolButton key={i} icon={icon} />
      ))}
      <Sep />
      <button className="flex items-center justify-center w-[17px] h-[15px] mx-[3px] border border-black bg-white text-[9px] leading-none">
        Syl
      </button>
      <div className="relative ml-[3px] mr-1 w-[77px] h-4">
        <select aria-label="Bar period" className="block w-full h-4 appearance-none bg-white pl-px text-[11px] leading-4">
          <option>Daily</option>
        </select>
        <span className="absolute right-px top-px w-[14px] h-[14px] bg-[#d6d3ce] pointer-events-none">
          <svg className="block w-[14px] h-[14px]">
            <path d="M3 5h8l-4 4z" />
          </svg>
        </span>
      </div>
      <Sep />
      {CHART_TYPES.map((icon, i) => (
        <ToolButton key={i} icon={icon} on={i === 0} />
      ))}
      <Sep />
      <div className="flex gap-2 pl-2 pr-[3px] pt-px">
        {["&Templates", "&Pages"].map((t) => (
          <button key={t} className="flex items-center gap-[3px]">
            <span>
              <Label text={t} />
            </span>
            <svg className="w-[6px] h-3">
              <path d="M0 7h6l-3 3z" />
            </svg>
          </button>
        ))}
      </div>
      <Sep />
      {SCALE_ICONS.map((icon, i) => (
        <ToolButton key={i} icon={icon} on={i === 5} />
      ))}
      <Sep />
      <ToolButton icon={CURSOR} />
      <ToolButton icon={CROSS} on />
    </div>
    <div className="flex items-center pl-[3px] pr-px border-t border-l border-l-white border-t-white border-b border-b-[#848284] border-r border-r-[#848284]">
      <Grip />
      {TRADE_ICONS.map((icon, i) => (
        <ToolButton key={i} icon={icon} />
      ))}
      <Sep />
      {OUTPUT_ICONS.map((icon, i) => (
        <ToolButton key={i} icon={icon} />
      ))}
    </div>
    <div className="flex items-center pl-1 pr-[3px] border-t border-l border-l-white border-t-white border-b border-b-[#848284] border-r border-r-[#848284]">
      <Grip />
      {MISC_ICONS.map((icon, i) => (
        <ToolButton key={i} icon={icon} />
      ))}
    </div>
  </div>
);

const SideBar = () => (
  <div className="flex flex-col items-center w-[26px] pt-1 pb-px self-start flex-none border-t border-l border-white border-r border-b border-r-[#848284] border-b-[#848284]">
    <div className="w-5 h-[3px] border-t border-t-white border-b border-b-[#848284]" />
    <div className="w-5 h-[3px] border-t border-t-white border-b border-b-[#848284]" />
    {SIDE_GROUPS.map((group, g) => (
      <React.Fragment key={g}>
        {g > 0 && <div className="w-[18px] h-[2px] my-[2px] border-t border-t-[#848284] border-b border-b-white" />}
        {group.map((icon, i) => (
          <ToolButton key={i} icon={icon} on={g === 0 && (i === 0 || i === 4)} />
        ))}
      </React.Fragment>
    ))}
  </div>
);

const ChartWindow = () => (
  <div className="flex-1 min-w-0 mt-[2px] ml-[3px] border-t-2 border-l-2 border-t-[#424142] border-l-[#424142] border-r-2 border-r-white bg-[#e7e3e7]">
    <div className={`flex items-center h-4 bg-[#08246b] text-white ${UI} text-[11px] leading-4 font-bold`}>
      <Anchor />
      <span className="flex-1 pl-1 whitespace-pre">
        {"*BA:  01/03/1962* - 11/07/2008  (Daily bars)   BA  --  Template: Default"}
      </span>
      <button className={`w-[15px] h-[15px] bg-[#d6d3ce] text-black leading-3 ${SANS} ${RAISED}`}>S</button>
      <button className={`w-[15px] h-[15px] mr-[2px] bg-[#d6d3ce] text-black leading-3 ${SANS} ${RAISED}`}>P</button>
    </div>
    <div className={`flex gap-[10px] h-[15px] pl-2 text-[#000084] ${SANS} text-[12px] leading-[14px] font-bold whitespace-pre`}>
      <span className="font-normal">Fri</span>
      <span>{"05/07/1999: "}</span>
      <span>O=38.31</span>
      <span>H=39.11</span>
      <span>L=38.15</span>
      <span>C=39.00</span>
      <span>MovingAvgMethod= 36.25</span>
      <span>MovingAvgMethod= 34.59</span>
      <span>TDofM=5</span>
      <span>TDofY=87</span>
    </div>
    <PricePane />
    <div className="h-[3px]" />
    <VolumePane />
    <div className="h-[3px]" />
    <RsiPane />
    <TimeAxis />
    <div className="flex h-4 border-t border-[#848284] bg-white">
      <button aria-label="Scroll left" className={`w-[15px] bg-[#d6d3ce] ${RAISED}`}>
        <svg className="block w-3 h-3">
          <path d="M8 2v8l-4-4z" />
        </svg>
      </button>
      <div className="flex-[1067] border-l border-l-[#424142]" />
      <div className={`w-[7px] bg-[#d6d3ce] ${RAISED}`} />
      <div className="flex-[261]" />
      <button aria-label="Scroll right" className={`w-[15px] bg-[#d6d3ce] ${RAISED}`}>
        <svg className="block w-3 h-3">
          <path d="M4 2v8l4-4z" />
        </svg>
      </button>
    </div>
    <div className="h-[7px] pt-[2px] bg-[#d6d3ce] border-t-2 border-t-[#848284]">
      <div className="ml-[74px] h-[2px] bg-[#424142]" />
    </div>
  </div>
);

/* ---------- strategy window ---------- */

const DIALOG_TOOLS: { text: string; icon: React.ReactNode; sep?: boolean; off?: boolean; on?: boolean }[] = [
  { text: "R&un", icon: <Gauge />, on: true },
  { text: "&Orders", icon: <Hat />, sep: true },
  {
    text: "&Notes",
    icon: (
      <>
        <path d="M4 2h13v16h-13z" fill="#ff0" strokeWidth="2" />
        <path d="M7 6.500h7M7 10.500h4M7 14.500h7" />
      </>
    ),
  },
  { text: "&Print", icon: <Printer />, sep: true },
  { text: "&Save", icon: <Floppy c="#848284" />, off: true },
  {
    text: "Save &As",
    icon: (
      <>
        <Floppy />
        <path d="M4 0v8M0 4h8M1 1l6 6M7 1l-6 6" stroke="#ff0" />
      </>
    ),
  },
  {
    text: "Re&name",
    icon: (
      <>
        <Floppy />
        <path d="M9.500 7.500h8v10h-8z" fill="#ff0" />
        <path d="M12 10l4 5M16 10l-4 5" />
      </>
    ),
    sep: true,
  },
  { text: "Wi&zard", icon: <Wand /> },
  { text: "&Toolbox", icon: <Tools /> },
  {
    text: "&Close",
    icon: (
      <Soft>
        <path d="M2 2c4 2 10 8 16 16M16 2c-5 3-10 9-14 16" stroke="#f00" strokeWidth="3" />
      </Soft>
    ),
  },
];

const COLUMNS: [string, string, string][] = [
  ["Identifier", "Market1", "w-[57px]"],
  ["Security", "Boeing Co", "w-[66px]"],
  ["Bar Period", "Daily", "w-[66px]"],
  ["Sec Type", "S", "w-[63px]"],
  ["Symbol", "*BA", ""],
];

const DateBox: React.FC<{ id: string; value: string }> = ({ id, value }) => (
  <div className="flex items-center gap-[2px]">
    <div className="flex w-[118px] h-[21px] border-2 border-t-[#848284] border-l-[#848284] border-r-white border-b-white">
      <input id={id} disabled defaultValue={value} className="flex-1 min-w-0 pl-px text-right pr-[3px] text-[#848284]" />
      {["M7 4v6l-3-3z", "M4 4v6l3-3z"].map((d) => (
        <button key={d} aria-label="Change date" className={`w-3 ${RAISED}`}>
          <svg className="block w-[10px] h-[14px]">
            <path d={d} />
          </svg>
        </button>
      ))}
    </div>
    <button aria-label="Calendar" className="w-5 h-[21px] border-2 border-[#848284] shadow-[1px_1px_#fff,inset_1px_1px_#fff]">
      <svg className="block w-4 h-4" fill="none" stroke="#848284">
        <path d="M3 5h10" strokeWidth="2" />
        <circle cx="12" cy="8" r="2" />
      </svg>
    </button>
  </div>
);

const Radio: React.FC<{ id: string; label?: string; on?: boolean }> = ({ id, label, on }) => (
  <input
    type="radio"
    id={id}
    name="range-end"
    aria-label={label}
    disabled
    defaultChecked={on}
    className="appearance-none flex-none w-[11px] h-[11px] rounded-full border border-t-[#424142] border-l-[#424142] border-r-white border-b-white checked:bg-[radial-gradient(#848284_2px,transparent_3px)]"
  />
);

const ErrorBox = () => (
  <div className={`absolute left-[59px] top-[139px] w-[304px] p-px pb-4 bg-[#d6d3ce] ${RAISED}`}>
    <div className={`h-[19px] pl-[3px] bg-linear-to-r from-[#08246b] to-[#a5cbf7] text-white font-bold leading-[19px] ${UI}`}>
      Strategy Test Error
    </div>
    <div className="flex items-center gap-[27px] pl-[14px] pt-[17px]">
      <svg className="w-8 h-8" viewBox="0 0 32 32">
        <path d="M18 3l13 24c1 3 0 5-3 5h-24l-2-2z" fill="#315194" />
        <path
          d="M15.500 1c1.500 0 2 1 2.500 2l11.500 23c1 2 0 4-2 4h-24.500c-2 0-3-2-2-4l12-23c.5-1 1-2 2.500-2z"
          fill="#ffdf00"
          stroke="#c69a00"
        />
        <path d="M15.500 9c2 0 2.500 1.500 2 3.500l-1.500 8.500h-1l-1.500-8.500c-.5-2 0-3.500 2-3.500z" fill="#181842" stroke="#181842" />
        <circle cx="15.500" cy="25" r="2.500" fill="#181842" />
      </svg>
      <span className="pt-2">There was an error loading data for *BA</span>
    </div>
    <button className="block w-[73px] h-[27px] mt-[18px] ml-[113px] p-px border border-black shadow-[inset_1px_1px_#fff,inset_-1px_-1px_#424142,inset_-2px_-2px_#848284]">
      <span className="block m-px h-[21px] leading-[19px] border border-dotted border-black">
        <Label text="&OK" />
      </span>
    </button>
  </div>
);

const StrategyWindow = () => (
  <div className={`absolute left-[445px] top-[323px] w-[792px] p-[3px] pb-[10px] bg-[#d6d3ce] ${RAISED} ${SANS} text-[11px] leading-[13px]`}>
    <div className="flex items-center h-[18px] pr-[2px] bg-linear-to-r from-[#848284] to-[#c6c3c6] text-[#d6d3ce] font-bold">
      <Icon size="w-[18px] h-[18px]">
        <Soft>
          <circle cx="6.500" cy="6.500" r="4.500" stroke="#000" strokeWidth="3.500" strokeDasharray="2 1.500" />
          <circle cx="6.500" cy="6.500" r="3.500" stroke="#ff0" strokeWidth="3" />
          <circle cx="13.500" cy="13.500" r="4.500" stroke="#000" strokeWidth="3.500" strokeDasharray="2 1.500" />
          <circle cx="13.500" cy="13.500" r="3.500" stroke="#ff0" strokeWidth="3" />
        </Soft>
      </Icon>
      <span className={`flex-1 pl-px whitespace-pre ${UI}`}>{"HLC>HLC.1 trail  [Strategy]"}</span>
      <WinButtons mid="max" />
    </div>
    <div className={`flex items-center h-[26px] mt-[2px] pl-1 border border-t-white border-l-white border-r-[#848284] border-b-[#848284] ${UI}`}>
      <div className="w-[3px] h-[22px] border-l border-l-white border-r border-r-[#848284]" />
      {DIALOG_TOOLS.map((t) => (
        <React.Fragment key={t.text}>
          <button
            disabled={t.off}
            className={`flex items-center gap-[2px] h-[22px] px-[3px] mr-[3px] whitespace-nowrap ${t.on ? `bg-[#efedea] ${SUNKEN}` : ""} ${t.off ? "text-[#848284] [text-shadow:1px_1px_#fff]" : ""}`}
          >
            <Icon size="w-[18px] h-[18px]">{t.icon}</Icon>
            <span>
              <Label text={t.text} />
            </span>
          </button>
          {t.sep && <Sep />}
        </React.Fragment>
      ))}
    </div>
    <div className="flex items-end h-[28px] pl-[9px]">
      {[
        ["&Rules", "w-[47px]"],
        ["&Inputs", "w-[51px]"],
        ["&Data", "w-[43px]"],
        ["Sett&ings", "w-[63px]"],
      ].map(([t, w]) => (
        <button
          key={t}
          className={`${w} ${UI} rounded-t-[2px] border-t border-l border-t-white border-l-white border-r-2 border-r-[#424142] ${
            t === "&Data" ? "h-5 font-bold text-[#08246b]" : "h-[18px]"
          }`}
        >
          <Label text={t} />
        </button>
      ))}
      <span className="ml-[43px] mb-[7px] text-[#0000c6]">(using data from active chart)</span>
    </div>
    <div className="flex ml-2 mr-[7px] pt-[9px] pl-[13px] pb-[7px] pr-[15px] border-t border-l border-t-white border-l-white border-r-2 border-b-2 border-r-[#424142] border-b-[#424142]">
      <div className="flex-1 h-[411px] bg-[#848284] border-2 border-t-[#424142] border-l-[#424142] border-r-white border-b-white">
        <table className="w-full table-fixed border-collapse text-left">
          <thead>
            <tr className="h-4 bg-[#d6d3ce]">
              {COLUMNS.map(([head, , w]) => (
                <th key={head} className={`${w} h-4 p-0 pl-[3px] font-normal border-r border-r-[#848284] border-b border-b-[#848284]`}>
                  {head}
                </th>
              ))}
            </tr>
          </thead>
          <tbody>
            <tr className="h-4 bg-[#08246b] text-white border-b border-b-black">
              {COLUMNS.map(([head, value]) => (
                <td key={head} className="h-4 p-0 pl-[3px] border-r border-r-[#d6d3ce] last:border-r-0">
                  {value}
                </td>
              ))}
            </tr>
          </tbody>
        </table>
      </div>
      <div className="w-[173px] ml-[13px] flex-none">
        <label className="flex items-center gap-[6px] mt-1 pl-1">
          <span className="relative w-3 h-3 flex-none">
            <input
              type="checkbox"
              defaultChecked
              className="block appearance-none w-3 h-3 bg-white border border-t-[#424142] border-l-[#424142] border-r-[#d6d3ce] border-b-[#d6d3ce]"
            />
            <svg className="absolute inset-0 w-3 h-3 pointer-events-none" fill="none" stroke="#000" strokeWidth="2">
              <path d="M3 5l2 3l4-5" />
            </svg>
          </span>
          <span>
            Use the active chart&apos;s symbol,
            <br />
            bar period and date range
          </span>
        </label>
        <div className="flex gap-[9px] mt-[14px]">
          <button disabled className={`w-[91px] h-[29px] text-[#848284] [text-shadow:1px_1px_#fff] ${RAISED}`}>
            <Label text="Symbol &LookUp" />
          </button>
          <button className="w-[71px] h-[29px] border border-black shadow-[inset_1px_1px_#fff,inset_-1px_-1px_#424142,inset_-2px_-2px_#848284]">
            <Label text="&Market Info" />
          </button>
        </div>
        <fieldset className="mt-[20px] h-[136px] px-[6px] border border-[#848284] shadow-[1px_1px_#fff] text-[#848284]">
          <legend className={`px-[2px] font-bold [text-shadow:1px_1px_#fff] ${UI}`}>Date Range to Test</legend>
          <label htmlFor="date-from" className="block pl-px pt-[6px]">
            From:
          </label>
          <div className="flex justify-end pt-[3px] -mr-[2px]">
            <DateBox id="date-from" value="Wed 01/03/1962" />
          </div>
          <label htmlFor="date-to" className="block pl-[5px] pt-2">
            To:
          </label>
          <div className="flex items-center justify-between pl-[2px] pt-[5px] -mr-[2px]">
            <Radio id="to-date" label="To date" />
            <DateBox id="date-to" value="Fri   11/07/2008" />
          </div>
          <div className="flex items-center gap-[6px] pl-[2px] pt-[5px]">
            <Radio id="end-of-data" on />
            <label htmlFor="end-of-data" className="[text-shadow:1px_1px_#fff]">
              End of Data
            </label>
          </div>
        </fieldset>
      </div>
    </div>
    <ErrorBox />
  </div>
);

const App: React.FC = () => (
  <div className="relative flex flex-col min-h-screen overflow-hidden bg-[#d6d3ce] text-black">
    <div className={`flex items-center h-[19px] pr-[2px] bg-linear-to-r from-[#848284] to-[#c6c3c6] text-[#d6d3ce] font-bold text-[11px] ${UI}`}>
      <span className="pl-[2px]">
        <Anchor />
      </span>
      <span className="flex-1 pl-[2px] whitespace-pre">{"Trade Navigator PLATINUM v4.2  --  Chart Page: (unnamed)"}</span>
      <WinButtons mid="restore" />
    </div>
    <div className={`flex items-center h-[26px] pt-[2px] pl-8 pr-[2px] border-t border-t-white border-b border-b-[#848284] text-[11px] ${UI}`}>
      <nav className="flex gap-2">
        {["&File", "&Edit", "&View", "&Reports", "&Charts", "&Drawing", "Tr&ading", "&Help"].map((t) => (
          <button key={t}>
            <Label text={t} />
          </button>
        ))}
      </nav>
      <div className="ml-8 w-[2px] h-[18px] bg-[#848284] border-r border-white" />
      <span className="flex-1 pl-[7px] text-[#848284]">Status:</span>
      <WinButtons mid="restore" />
    </div>
    <Toolbar />
    <div className="flex flex-1">
      <ChartWindow />
      <div className="w-1 flex-none" />
      <SideBar />
    </div>
    <StrategyWindow />
  </div>
);

export default App;
